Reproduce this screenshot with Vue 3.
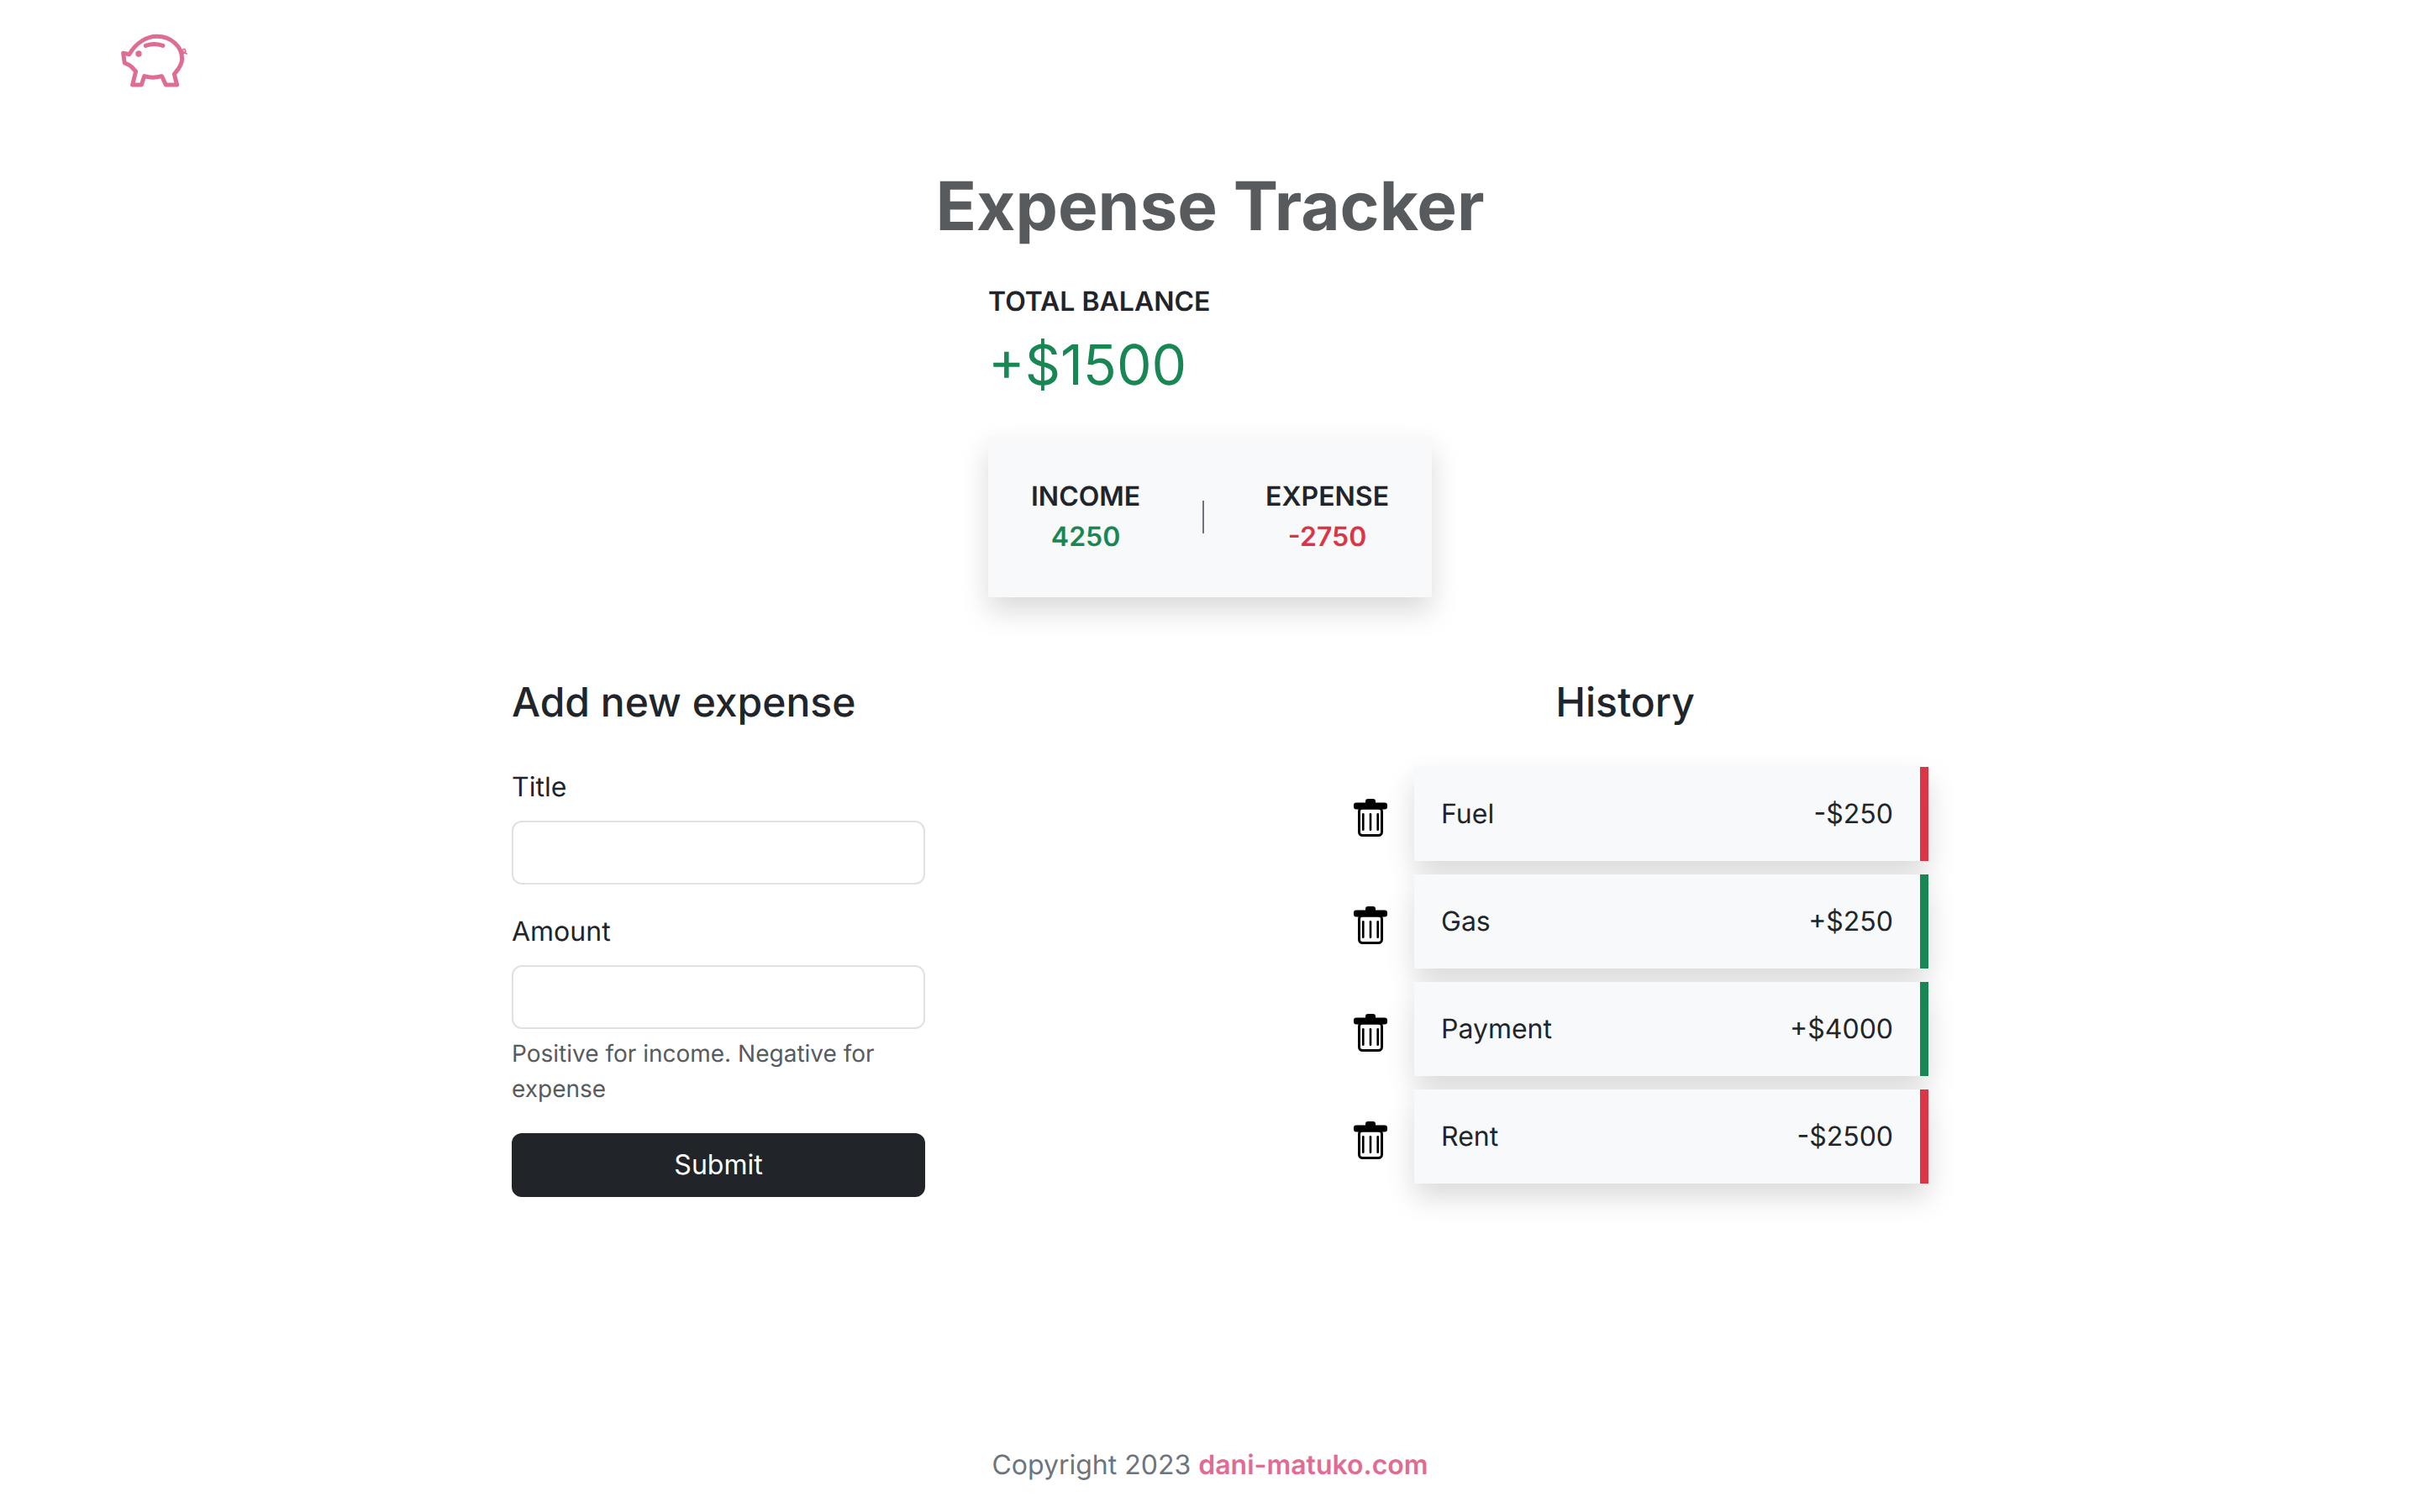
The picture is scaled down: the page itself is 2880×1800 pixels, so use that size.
<script setup>
const items = [
  { id: 1, title: 'Fuel', amount: '-$250', type: 'minus' },
  { id: 2, title: 'Gas', amount: '+$250', type: 'plus' },
  { id: 3, title: 'Payment', amount: '+$4000', type: 'plus' },
  { id: 4, title: 'Rent', amount: '-$2500', type: 'minus' }
]
</script>

<template>
  <div class="page">
    <header class="top">
      <svg class="logo" viewBox="0 0 360 300" fill="none" stroke="#df6c93" stroke-width="15" stroke-linejoin="round" stroke-linecap="round">
        <path d="M80 130 L102 134 C125 92 165 70 200 70 C250 70 290 105 290 150 C290 175 272 192 262 205 L272 243 L232 243 L218 212 C195 218 175 218 155 212 L145 243 L113 243 L125 195 C115 185 108 176 100 172 L85 165 Z" />
        <path d="M160 103 C180 96 200 96 222 103" />
        <circle cx="135" cy="132" r="11" fill="#df6c93" stroke="none" />
        <path d="M289 130 C300 131 306 124 300 116 C292 111 288 124 300 129 L307 132" stroke-width="5" />
      </svg>
    </header>

    <h1 class="title">Expense Tracker</h1>

    <section class="summary">
      <h2 class="balance-label">TOTAL BALANCE</h2>
      <p class="balance">+$1500</p>
      <div class="card">
        <div class="stat">
          <div class="stat-label">INCOME</div>
          <div class="stat-value green">4250</div>
        </div>
        <div class="divider"></div>
        <div class="stat">
          <div class="stat-label">EXPENSE</div>
          <div class="stat-value red">-2750</div>
        </div>
      </div>
    </section>

    <main class="content">
      <form class="form" @submit.prevent>
        <h3 class="heading">Add new expense</h3>
        <div class="field">
          <label for="title">Title</label>
          <input id="title" type="text" />
        </div>
        <div class="field">
          <label for="amount">Amount</label>
          <input id="amount" type="text" />
          <p class="help">Positive for income. Negative for expense</p>
        </div>
        <button class="submit" type="submit">Submit</button>
      </form>

      <section class="history">
        <h3 class="heading centered">History</h3>
        <ul class="list">
          <li v-for="item in items" :key="item.id" class="row">
            <svg class="trash" viewBox="0 0 40 45">
              <rect x="14" y="0" width="12" height="7" rx="3" fill="#000" />
              <rect x="0" y="4.5" width="40" height="8" rx="3" fill="#000" />
              <rect x="6.5" y="11" width="27" height="32.5" rx="4" fill="none" stroke="#000" stroke-width="3" />
              <rect x="10" y="17" width="2.6" height="21" rx="1.3" fill="#000" />
              <rect x="18.7" y="17" width="2.6" height="21" rx="1.3" fill="#000" />
              <rect x="27.4" y="17" width="2.6" height="21" rx="1.3" fill="#000" />
            </svg>
            <div class="entry" :class="item.type">
              <span>{{ item.title }}</span>
              <span>{{ item.amount }}</span>
            </div>
          </li>
        </ul>
      </section>
    </main>

    <footer class="footer">
      Copyright 2023 <a class="link" href="#">dani-matuko.com</a>
    </footer>
  </div>
</template>

<style>
body {
  background: #fff;
}
</style>

<style scoped>
.page {
  display: flex;
  flex-direction: column;
  min-height: 1800px;
  box-sizing: border-box;
  font-family: Inter, "Liberation Sans", sans-serif;
  font-size: 32px;
  line-height: 1.5;
  color: #212529;
  text-rendering: geometricPrecision;
}

.top {
  padding: 20px 0 0 120px;
}

.logo {
  display: block;
  width: 120px;
  height: 100px;
}

.title {
  margin: 78px 0 0;
  font-size: 80px;
  font-weight: 700;
  line-height: 1.2;
  text-align: center;
  color: #585b5e;
}

.summary {
  width: 528px;
  margin: 41px auto 0;
}

.balance-label {
  margin: 0;
  font-size: 32px;
  font-weight: 600;
  line-height: 48px;
}

.balance {
  margin: 10px 0 0;
  font-size: 66px;
  font-weight: 400;
  line-height: 82px;
  color: #198754;
}

.card {
  display: flex;
  justify-content: space-between;
  align-items: center;
  margin-top: 44px;
  padding: 48px 51px;
  background: #f8f9fa;
  box-shadow: 0 16px 32px rgba(0, 0, 0, 0.15);
}

.stat {
  text-align: center;
}

.stat-label {
  font-weight: 600;
}

.stat-value {
  font-weight: 600;
}

.green {
  color: #198754;
}

.red {
  color: #dc3545;
}

.divider {
  width: 2px;
  height: 39px;
  background: #6c757d;
}

.content {
  display: flex;
  justify-content: space-between;
  box-sizing: border-box;
  width: 1710px;
  margin: 96px auto 0;
  padding-left: 24px;
}

.form {
  width: 492px;
}

.heading {
  margin: 0 0 48px;
  font-size: 48px;
  font-weight: 500;
  line-height: 1.2;
}

.centered {
  text-align: center;
}

.field {
  margin-bottom: 32px;
}

label {
  display: block;
  margin-bottom: 16px;
}

input {
  display: block;
  box-sizing: border-box;
  width: 100%;
  height: 76px;
  border: 2px solid #dee2e6;
  border-radius: 12px;
  background: #fff;
}

.help {
  margin: 8px 0 0;
  font-size: 28px;
  line-height: 42px;
  color: #585b5e;
}

.submit {
  display: block;
  width: 100%;
  height: 76px;
  border: none;
  border-radius: 12px;
  background: #212529;
  color: #fff;
  font: inherit;
}

.history {
  width: 722px;
}

.list {
  display: flex;
  flex-direction: column;
  gap: 16px;
  margin: 0;
  padding: 0 0 0 38px;
  list-style: none;
}

.row {
  display: flex;
  align-items: center;
  gap: 32px;
}

.trash {
  flex: none;
  width: 40px;
  height: 45px;
  margin-top: 10px;
}

.entry {
  flex: 1;
  display: flex;
  justify-content: space-between;
  align-items: center;
  height: 112px;
  padding: 0 32px;
  background: #f8f9fa;
  box-shadow: 0 16px 32px rgba(0, 0, 0, 0.15);
}

.entry.minus {
  border-right: 10px solid #dc3545;
}

.entry.plus {
  border-right: 10px solid #198754;
}

.footer {
  margin-top: auto;
  padding-bottom: 32px;
  text-align: center;
  color: #6c757d;
}

.link {
  color: #df6c93;
  font-weight: 600;
  text-decoration: none;
}
</style>
